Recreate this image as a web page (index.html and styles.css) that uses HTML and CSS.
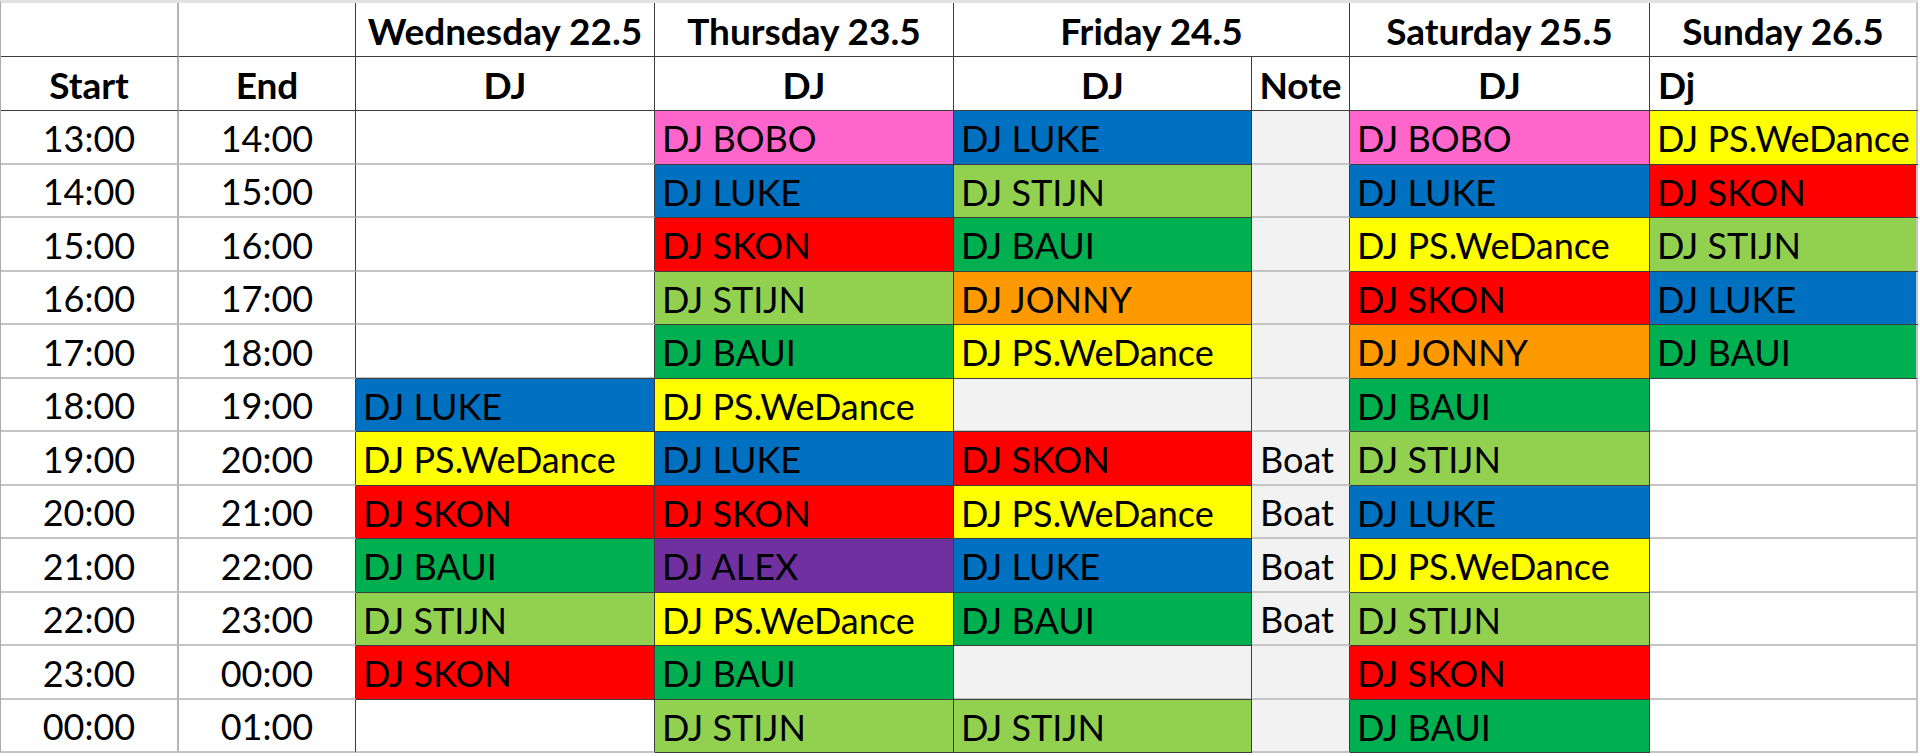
FILE: index.html
```html
<!DOCTYPE html>
<html lang="en">
<head>
    <meta charset="UTF-8">
    <meta name="viewport" content="width=device-width, initial-scale=1.0">
    <title>DJ Schedule</title>
    <link rel="stylesheet" href="styles.css">
</head>
<body>
    <div class="sheet">
        <!-- header row 1 -->
        <div class="cell head start"></div>
        <div class="cell head"></div>
        <div class="cell head bold center">Wednesday 22.5</div>
        <div class="cell head bold center">Thursday 23.5</div>
        <div class="cell head bold center friday">Friday 24.5</div>
        <div class="cell head bold center">Saturday 25.5</div>
        <div class="cell head bold center sun">Sunday 26.5</div>

        <!-- header row 2 -->
        <div class="cell head bold center start">Start</div>
        <div class="cell head bold center">End</div>
        <div class="cell head bold center">DJ</div>
        <div class="cell head bold center">DJ</div>
        <div class="cell head bold center">DJ</div>
        <div class="cell head bold center">Note</div>
        <div class="cell head bold center">DJ</div>
        <div class="cell head bold left sun">Dj</div>

        <div class="cell center start">13:00</div>
        <div class="cell center">14:00</div>
        <div class="cell"></div>
        <div class="cell dj pink">DJ BOBO</div>
        <div class="cell dj blue">DJ LUKE</div>
        <div class="cell grey"></div>
        <div class="cell dj pink">DJ BOBO</div>
        <div class="cell dj yellow sun">DJ PS.WeDance</div>

        <div class="cell center start">14:00</div>
        <div class="cell center">15:00</div>
        <div class="cell"></div>
        <div class="cell dj blue">DJ LUKE</div>
        <div class="cell dj lime">DJ STIJN</div>
        <div class="cell grey"></div>
        <div class="cell dj blue">DJ LUKE</div>
        <div class="cell dj red sun">DJ SKON</div>

        <div class="cell center start">15:00</div>
        <div class="cell center">16:00</div>
        <div class="cell"></div>
        <div class="cell dj red">DJ SKON</div>
        <div class="cell dj green">DJ BAUI</div>
        <div class="cell grey"></div>
        <div class="cell dj yellow">DJ PS.WeDance</div>
        <div class="cell dj lime sun">DJ STIJN</div>

        <div class="cell center start">16:00</div>
        <div class="cell center">17:00</div>
        <div class="cell"></div>
        <div class="cell dj lime">DJ STIJN</div>
        <div class="cell dj orange">DJ JONNY</div>
        <div class="cell grey"></div>
        <div class="cell dj red">DJ SKON</div>
        <div class="cell dj blue sun">DJ LUKE</div>

        <div class="cell center start">17:00</div>
        <div class="cell center">18:00</div>
        <div class="cell"></div>
        <div class="cell dj green">DJ BAUI</div>
        <div class="cell dj yellow">DJ PS.WeDance</div>
        <div class="cell grey"></div>
        <div class="cell dj orange">DJ JONNY</div>
        <div class="cell dj green sun">DJ BAUI</div>

        <div class="cell center start">18:00</div>
        <div class="cell center">19:00</div>
        <div class="cell dj blue">DJ LUKE</div>
        <div class="cell dj yellow">DJ PS.WeDance</div>
        <div class="cell grey"></div>
        <div class="cell grey"></div>
        <div class="cell dj green">DJ BAUI</div>
        <div class="cell sun"></div>

        <div class="cell center start">19:00</div>
        <div class="cell center">20:00</div>
        <div class="cell dj yellow">DJ PS.WeDance</div>
        <div class="cell dj blue">DJ LUKE</div>
        <div class="cell dj red">DJ SKON</div>
        <div class="cell grey note">Boat</div>
        <div class="cell dj lime">DJ STIJN</div>
        <div class="cell sun"></div>

        <div class="cell center start">20:00</div>
        <div class="cell center">21:00</div>
        <div class="cell dj red">DJ SKON</div>
        <div class="cell dj red">DJ SKON</div>
        <div class="cell dj yellow">DJ PS.WeDance</div>
        <div class="cell grey note">Boat</div>
        <div class="cell dj blue">DJ LUKE</div>
        <div class="cell sun"></div>

        <div class="cell center start">21:00</div>
        <div class="cell center">22:00</div>
        <div class="cell dj green">DJ BAUI</div>
        <div class="cell dj purple">DJ ALEX</div>
        <div class="cell dj blue">DJ LUKE</div>
        <div class="cell grey note">Boat</div>
        <div class="cell dj yellow">DJ PS.WeDance</div>
        <div class="cell sun"></div>

        <div class="cell center start">22:00</div>
        <div class="cell center">23:00</div>
        <div class="cell dj lime">DJ STIJN</div>
        <div class="cell dj yellow">DJ PS.WeDance</div>
        <div class="cell dj green">DJ BAUI</div>
        <div class="cell grey note">Boat</div>
        <div class="cell dj lime">DJ STIJN</div>
        <div class="cell sun"></div>

        <div class="cell center start">23:00</div>
        <div class="cell center">00:00</div>
        <div class="cell dj red">DJ SKON</div>
        <div class="cell dj green">DJ BAUI</div>
        <div class="cell grey"></div>
        <div class="cell grey"></div>
        <div class="cell dj red">DJ SKON</div>
        <div class="cell sun"></div>

        <div class="cell center start">00:00</div>
        <div class="cell center">01:00</div>
        <div class="cell"></div>
        <div class="cell dj lime">DJ STIJN</div>
        <div class="cell dj lime">DJ STIJN</div>
        <div class="cell grey"></div>
        <div class="cell dj green">DJ BAUI</div>
        <div class="cell sun"></div>
    </div>
</body>
</html>
```

FILE: styles.css
```css
body {
    margin: 0;
    background-color: #fff;
    font-family: Lato, "Open Sans", sans-serif;
    color: #000;
}

.sheet {
    display: grid;
    grid-template-columns: 178px 177px 299px 299px 298px 98px 300px 268px;
    grid-template-rows: 54px 54px repeat(12, 53.5px);
    border-top: 3px solid #e2e2e2;
    border-left: 1px solid #ababab;
    width: 1917px;
}

.cell {
    box-sizing: border-box;
    display: flex;
    align-items: center;
    font-size: 36px;
    padding-top: 2px;
    border-right: 1px solid #3c3c3c;
    border-bottom: 2px solid #c4c4c4;
    white-space: nowrap;
    overflow: hidden;
}

.head {
    border-bottom: 1px solid #3c3c3c;
}

.bold {
    font-weight: bold;
    font-size: 37px;
}

.center {
    justify-content: center;
}

.left {
    padding-left: 8px;
}

.start {
    border-right: 2px solid #b4b4b4;
}

.sun {
    border-right: 2px solid #c4c4c4;
}

.friday {
    grid-column: span 2;
}

.dj {
    padding-left: 7px;
    border-bottom: 1px solid #3c3c3c;
    box-shadow: 0 -1px 0 #3c3c3c;
}

.note {
    padding-left: 8px;
}

.grey { background-color: #f2f2f2; }
.pink { background-color: #ff66cc; }
.blue { background-color: #0070c0; }
.red { background-color: #ff0000; }
.lime { background-color: #92d050; }
.green { background-color: #00b050; }
.orange { background-color: #ff9900; }
.yellow { background-color: #ffff00; }
.purple { background-color: #7030a0; }
```
